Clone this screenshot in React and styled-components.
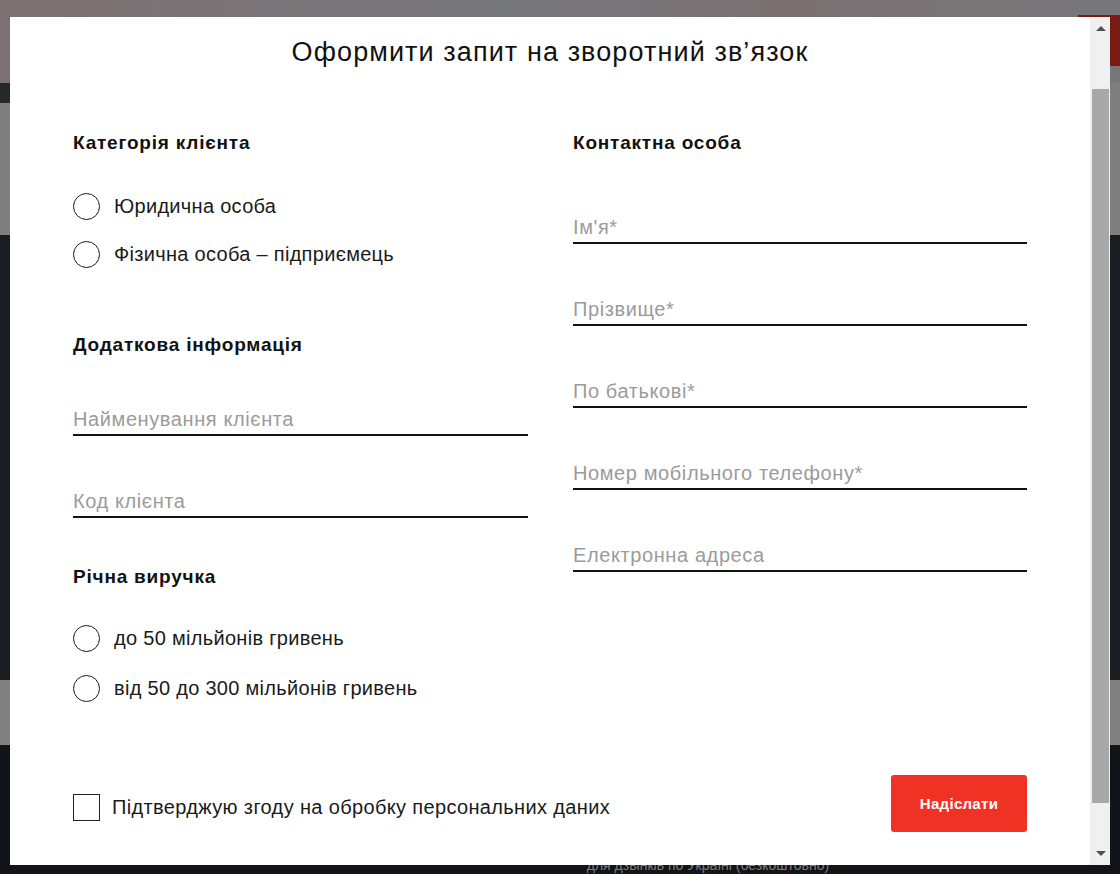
import React from 'react';
import styled, { createGlobalStyle } from 'styled-components';

const GlobalStyle = createGlobalStyle`
	html, body {
		margin: 0;
		padding: 0;
		height: 100%;
		overflow: hidden;
	}
	body {
		font-family: "Liberation Sans", Arial, sans-serif;
		color: #151515;
	}
	* {
		box-sizing: border-box;
	}
`;

// page behind the dialog (dimmed)
const Page = styled.div`
	width: 1120px;
	height: 874px;
	display: flex;
	flex-direction: column;
	overflow: hidden;
`;
const Band = styled.div`
	flex: 0 0 ${(p) => p.h}px;
	background: ${(p) => p.bg};
	display: flex;
	justify-content: ${(p) => p.justify || 'flex-start'};
	align-items: ${(p) => p.align || 'stretch'};
`;
const HeaderRed = styled.div`
	width: 42px;
	height: 51px;
	margin-top: 15px;
	background: #7a1a15;
`;
const NavDark = styled.div`
	width: 320px;
	background: #27282c;
`;
const FooterText = styled.div`
	width: 100%;
	text-align: center;
	padding-left: 296px;
	font-size: 14px;
	line-height: 18px;
	color: #7d7d80;
	margin-top: -6px;
`;

// dialog
const Dialog = styled.div`
	position: fixed;
	top: 17px;
	left: 10px;
	width: 1100px;
	height: 848px;
	display: flex;
	background: #fff;
`;
const DialogBody = styled.div`
	flex: 1;
	padding: 20px 63px 0 63px;
`;
const Title = styled.h1`
	margin: 0;
	text-align: center;
	font-weight: 400;
	font-size: 27px;
	line-height: 30px;
	letter-spacing: 1.1px;
	color: #111;
`;
const Columns = styled.div`
	display: grid;
	grid-template-columns: 455px 454px;
	column-gap: 45px;
	margin-top: 65px;
	align-items: start;
`;
const Column = styled.div`
	display: flex;
	flex-direction: column;
`;
const SectionTitle = styled.h3`
	margin: ${(p) => p.mt || 0}px 0 0 0;
	font-size: 19px;
	line-height: 22px;
	font-weight: 700;
	letter-spacing: 0.8px;
	color: #111;
`;
const RadioRow = styled.label`
	display: flex;
	align-items: center;
	gap: 14px;
	height: 26px;
	margin-top: ${(p) => p.mt}px;
	font-size: 20px;
	letter-spacing: 0.3px;
	color: #1a1a1a;
	cursor: pointer;
`;
const RadioCircle = styled.span`
	width: 27px;
	height: 27px;
	border-radius: 50%;
	border: 1.5px solid #1c1c1c;
	flex: 0 0 auto;
`;
const Field = styled.input`
	display: block;
	width: 100%;
	margin-top: ${(p) => p.mt}px;
	padding: 0 0 4px 0;
	border: 0;
	border-bottom: 2px solid #111;
	font-family: inherit;
	font-size: 20px;
	line-height: 22px;
	height: 28px;
	letter-spacing: 0.6px;
	background: transparent;
	outline: none;
	&::placeholder {
		color: #9b9b9b;
	}
`;
const Footer = styled.div`
	display: flex;
	justify-content: space-between;
	align-items: center;
	margin-top: 74px;
`;
const Consent = styled.label`
	display: flex;
	align-items: center;
	gap: 12px;
	margin-top: 7px;
	font-size: 20px;
	letter-spacing: 0.35px;
	color: #1a1a1a;
`;
const CheckBox = styled.span`
	width: 27px;
	height: 27px;
	border: 1.5px solid #222;
	flex: 0 0 auto;
`;
const SubmitButton = styled.button`
	width: 136px;
	height: 57px;
	border: 0;
	border-radius: 3px;
	background: #f03225;
	color: #fff;
	font-family: inherit;
	font-weight: 700;
	font-size: 15px;
	letter-spacing: 0.3px;
	cursor: pointer;
`;

// fake scrollbar
const ScrollTrack = styled.div`
	width: 20px;
	background: #f0f0f0;
	display: flex;
	flex-direction: column;
	align-items: center;
	padding: 9px 0 9px 1px;
`;
const Arrow = styled.span`
	width: 0;
	height: 0;
	border-left: 5px solid transparent;
	border-right: 5px solid transparent;
	${(p) => (p.down ? 'border-top: 5px solid #505050;' : 'border-bottom: 5px solid #505050;')}
`;
const Thumb = styled.div`
	width: 17px;
	height: 714px;
	margin-top: 58px;
	background: #a8a8a8;
`;
const Spacer = styled.div`
	flex: 1;
`;

const Radio = ({ label, mt }) => (
	<RadioRow mt={mt}>
		<RadioCircle />
		{label}
	</RadioRow>
);

const App = () => {
	return (
		<>
			<GlobalStyle />
			<Page>
				<Band h={83} bg="linear-gradient(90deg, #7c7072 0%, #76777a 45%, #7a7072 70%, #777779 100%)" justify="flex-end">
					<HeaderRed />
				</Band>
				<Band h={20} bg="#7f7f7f">
					<NavDark />
				</Band>
				<Band h={132} bg="#7f7f7f" />
				<Band h={445} bg="#1b1c1f" />
				<Band h={65} bg="#808080" />
				<Band h={129} bg="#131417" align="flex-end">
					<FooterText>для дзвінків по Україні (безкоштовно)</FooterText>
				</Band>
			</Page>
			<Dialog>
				<DialogBody>
					<Title>Оформити запит на зворотний зв’язок</Title>
					<Columns>
						<Column>
							<SectionTitle>Категорія клієнта</SectionTitle>
							<Radio mt={39} label="Юридична особа" />
							<Radio mt={22} label="Фізична особа – підприємець" />
							<SectionTitle mt={67}>Додаткова інформація</SectionTitle>
							<Field mt={52} placeholder="Найменування клієнта" />
							<Field mt={54} placeholder="Код клієнта" />
							<SectionTitle mt={48}>Річна виручка</SectionTitle>
							<Radio mt={37} label="до 50 мільйонів гривень" />
							<Radio mt={24} label="від 50 до 300 мільйонів гривень" />
						</Column>
						<Column>
							<SectionTitle>Контактна особа</SectionTitle>
							<Field mt={62} placeholder="Ім'я*" />
							<Field mt={54} placeholder="Прізвище*" />
							<Field mt={54} placeholder="По батькові*" />
							<Field mt={54} placeholder="Номер мобільного телефону*" />
							<Field mt={54} placeholder="Електронна адреса" />
						</Column>
					</Columns>
					<Footer>
						<Consent>
							<CheckBox />
							Підтверджую згоду на обробку персональних даних
						</Consent>
						<SubmitButton>Надіслати</SubmitButton>
					</Footer>
				</DialogBody>
				<ScrollTrack>
					<Arrow />
					<Thumb />
					<Spacer />
					<Arrow down />
				</ScrollTrack>
			</Dialog>
		</>
	);
};

export default App;
